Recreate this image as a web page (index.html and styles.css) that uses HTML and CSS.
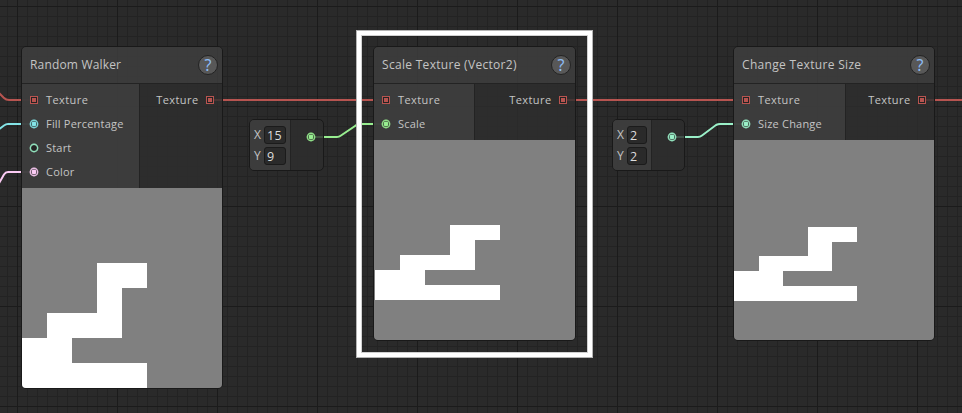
FILE: index.html
```html
<!DOCTYPE html>
<html lang="en">
<head>
<meta charset="utf-8">
<title>Texture Graph</title>
<link rel="stylesheet" href="styles.css">
</head>
<body>
<main class="canvas">
  <svg class="wires" width="962" height="413" viewBox="0 0 962 413">
    <path class="red" d="M-6 88L4 98Q6 100 9 100H34"/>
    <path class="cyan" d="M-6 133L4 125.500Q6 124 8 124H34"/>
    <path class="pink" d="M-5 190L4 174.500Q5.500 172 8 172H34"/>
    <path class="red" d="M210 100H386M563 100H746M922 100H970"/>
    <path class="green" d="M311 137H337Q339 137 341 135.500L355 126Q357 124 360 124H386"/>
    <path class="mint" d="M672 137H698Q700 137 702 135.500L716 125Q718 124 720 124H746"/>
  </svg>

  <section class="node walker">
    <header class="head"><h2>Random Walker</h2><span class="help">?</span></header>
    <div class="ports">
      <div class="inputs">
        <div class="row red"><i class="port square"></i><span>Texture</span></div>
        <div class="row cyan"><i class="port dot"></i><span>Fill Percentage</span></div>
        <div class="row mint"><i class="port dot empty"></i><span>Start</span></div>
        <div class="row pink"><i class="port dot"></i><span>Color</span></div>
      </div>
      <div class="outputs"><div class="row red"><span>Texture</span><i class="port square"></i></div></div>
    </div>
    <svg class="preview" width="200" height="200" shape-rendering="crispEdges"><path d="M0 150H25V125H75V75H125V100H100V150H50V175H125V200H0Z"/></svg>
  </section>

  <section class="node scale">
    <header class="head"><h2>Scale Texture (Vector2)</h2><span class="help">?</span></header>
    <div class="ports">
      <div class="inputs">
        <div class="row red"><i class="port square"></i><span>Texture</span></div>
        <div class="row green"><i class="port dot"></i><span>Scale</span></div>
      </div>
      <div class="outputs"><div class="row red"><span>Texture</span><i class="port square"></i></div></div>
    </div>
    <svg class="preview" width="201" height="200" shape-rendering="crispEdges"><path d="M1 130H26V115H76V85H126V100H101V130H51V145H126V160H1Z"/></svg>
  </section>

  <section class="node resize">
    <header class="head"><h2>Change Texture Size</h2><span class="help">?</span></header>
    <div class="ports">
      <div class="inputs">
        <div class="row red"><i class="port square"></i><span>Texture</span></div>
        <div class="row mint"><i class="port dot"></i><span>Size Change</span></div>
      </div>
      <div class="outputs"><div class="row red"><span>Texture</span><i class="port square"></i></div></div>
    </div>
    <svg class="preview" width="200" height="200" shape-rendering="crispEdges"><path d="M0 131H25V116H74V87H123V102H98V131H49V146H123V161H0Z"/></svg>
  </section>

  <section class="vector first">
    <div class="fields">
      <label>X<b>15</b></label>
      <label>Y<b>9</b></label>
    </div>
    <div class="out green"><i class="port dot"></i></div>
  </section>
  <section class="vector second">
    <div class="fields">
      <label>X<b>2</b></label>
      <label>Y<b>2</b></label>
    </div>
    <div class="out mint"><i class="port dot"></i></div>
  </section>

  <div class="highlight"></div>
</main>
</body>
</html>
```
FILE: styles.css
```css
* { box-sizing: border-box; }
body { margin: 0; }
.canvas {
  position: relative;
  width: 962px;
  height: 413px;
  overflow: hidden;
  background-color: #2a2a2a;
  background-image:
    linear-gradient(90deg, #1b1b1b 1px, transparent 1px),
    linear-gradient(#1b1b1b 1px, transparent 1px),
    linear-gradient(90deg, #232323 1px, transparent 1px),
    linear-gradient(#232323 1px, transparent 1px);
  background-size: 100px 100px, 100px 100px, 10px 10px, 10px 10px;
  background-position: 17px 6px, 17px 6px, 7px 6px, 7px 6px;
  font-family: "Open Sans", "Noto Sans", sans-serif;
  font-size: 11px;
  color: #c4c4c4;
}
.red { --c: #b75450; }
.cyan { --c: #84e4e7; }
.mint { --c: #9af0c8; }
.green { --c: #98ee90; }
.pink { --c: #fbcbf4; }

.wires { position: absolute; left: 0; top: 0; }
.wires path { fill: none; stroke: var(--c); stroke-width: 2; }

.node {
  position: absolute;
  top: 46px;
  border: 1px solid #191919;
  border-radius: 5px;
  overflow: hidden;
}
.walker { left: 21px; width: 202px; --split: 118px; }
.scale { left: 373px; width: 203px; --split: 101px; }
.resize { left: 733px; width: 202px; --split: 112px; }
.head {
  display: flex;
  align-items: center;
  justify-content: space-between;
  height: 37px;
  padding: 0 4px 0 8px;
  background: rgba(63, 63, 63, .82);
  border-bottom: 1px solid #232323;
}
.head h2 {
  margin: 0;
  padding-bottom: 1px;
  font-size: 12px;
  font-weight: 400;
  letter-spacing: .17px;
  white-space: nowrap;
}
.scale h2 { letter-spacing: .3px; }
.resize h2 { letter-spacing: .32px; }
.help {
  width: 20px;
  height: 20px;
  border: 1px solid #232323;
  border-radius: 50%;
  background: #585858;
  color: #8dbcf5;
  font-family: "Noto Sans", sans-serif;
  font-size: 16px;
  line-height: 18px;
  text-align: center;
}
.ports { display: flex; background: rgba(46, 46, 46, .82); }
.inputs {
  width: var(--split);
  padding: 4px 0;
  background: rgba(63, 63, 63, .82);
  border-right: 1px solid #232323;
}
.outputs { flex: 1; padding: 4px 0; }
.row {
  display: flex;
  align-items: center;
  gap: 8px;
  height: 24px;
  padding-left: 8px;
  letter-spacing: .42px;
  white-space: nowrap;
}
.row span { padding-bottom: 1px; }
.inputs .row:not(.red) { letter-spacing: .2px; }
.outputs .row { justify-content: flex-end; padding: 0 8px 0 0; gap: 7.5px; }
.port {
  display: block;
  flex: none;
  width: 8px;
  height: 8px;
  border: 1px solid var(--c);
  background: #232323;
}
.port::after {
  content: "";
  display: block;
  width: 4px;
  height: 4px;
  margin: 1px;
  background: var(--c);
}
.dot, .dot::after { border-radius: 50%; }
.dot, .dot:not(.empty)::after { box-shadow: 0 0 0 .4px var(--c); }
.empty::after { display: none; }
.preview { display: block; background: #808080; }
.preview path { fill: #fff; }

.vector {
  position: absolute;
  top: 119px;
  height: 52px;
  display: flex;
  border: 1px solid #191919;
  border-radius: 5px;
  overflow: hidden;
  background: rgba(46, 46, 46, .82);
}
.first { left: 249px; width: 75px; }
.second { left: 612px; width: 73px; }
.fields {
  display: flex;
  flex-direction: column;
  gap: 3px;
  width: 41px;
  padding: 6px 4px 0;
  background: rgba(63, 63, 63, .82);
  border-right: 1px solid #232323;
}
.second .fields { width: 39px; }
.fields label {
  display: flex;
  align-items: center;
  justify-content: space-between;
  height: 18px;
  font-size: 12px;
  line-height: 18px;
}
.fields b {
  width: 22px;
  height: 18px;
  padding-left: 2px;
  border: 1px solid #1b1b1b;
  border-radius: 3px;
  background: #2a2a2a;
  color: #dcdcdc;
  font-size: 12.5px;
  font-weight: 400;
  line-height: 17px;
  letter-spacing: .3px;
}
.second b { width: 20px; }
.out { flex: 1; display: flex; justify-content: flex-end; padding: 13px 8px 0 0; }

.highlight {
  position: absolute;
  left: 356px;
  top: 30px;
  width: 237px;
  height: 328px;
  border: 1px solid #b4b4b4;
  box-shadow: inset 0 0 0 4px #fff, inset 0 0 0 5px #d0d0d0;
}
```
